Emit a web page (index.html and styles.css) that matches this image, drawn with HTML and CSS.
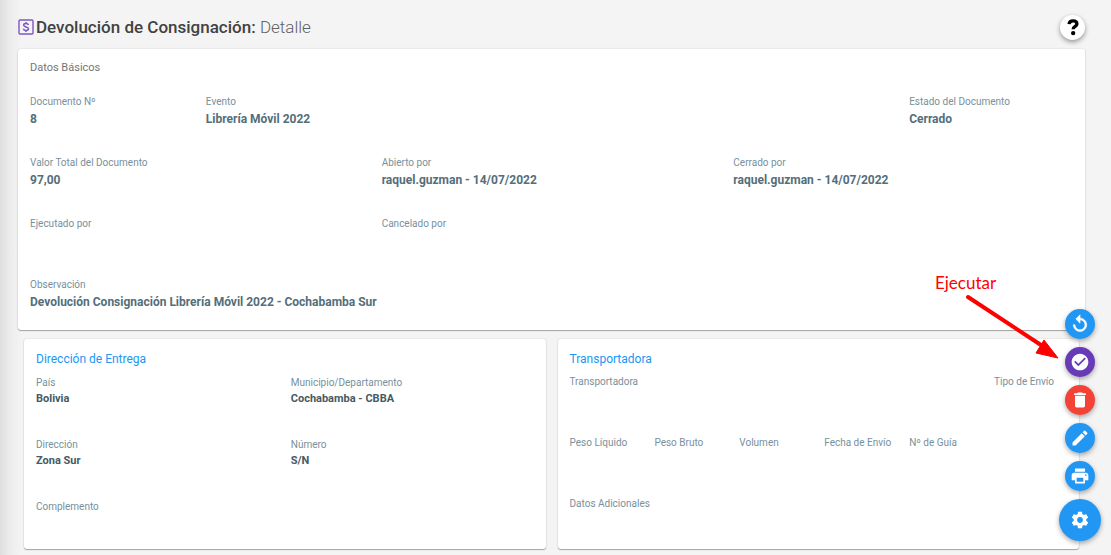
FILE: index.html
```html
<!DOCTYPE html>
<html lang="es">
<head>
<meta charset="utf-8">
<meta name="viewport" content="width=device-width, initial-scale=1">
<title>Devolución de Consignación</title>
<link rel="stylesheet" href="styles.css">
</head>
<body>
<main class="page">
  <header class="page-header">
    <svg class="title-icon" viewBox="0 0 16 16" aria-hidden="true">
      <rect x="1" y="1" width="14" height="14" rx="1" fill="none" stroke="currentColor" stroke-width="1.4"/>
      <path d="M10.400 6C10.200 4.900 9.300 4.400 8 4.400S5.600 5 5.600 6.100S6.800 7.600 8 7.900S10.500 8.600 10.500 9.800S9.300 11.500 8 11.500S5.600 11 5.500 9.800M8 2.900V4.500M8 11.500V13.100" fill="none" stroke="currentColor" stroke-width="1.5"/>
    </svg>
    <h1 class="title">Devolución de Consignación: <span class="title-sub">Detalle</span></h1>
    <button class="help" type="button" aria-label="Ayuda">
      <svg viewBox="0 0 24 24" aria-hidden="true"><path d="M7.300 8.500C7.500 5.700 9.500 4.700 12 4.700C14.700 4.700 16.700 6 16.700 8.300C16.700 11.400 12.200 11.300 12.200 14.800" fill="none" stroke="#000" stroke-width="4"/><circle cx="12.200" cy="19.300" r="2.600"/></svg>
    </button>
  </header>

  <section class="card basic">
    <h2 class="section-label">Datos Básicos</h2>
    <dl class="fields">
      <div class="field"><dt>Documento Nº</dt><dd>8</dd></div>
      <div class="field span-4"><dt>Evento</dt><dd>Librería Móvil 2022</dd></div>
      <div class="field"><dt>Estado del Documento</dt><dd>Cerrado</dd></div>
      <div class="field span-2"><dt>Valor Total del Documento</dt><dd>97,00</dd></div>
      <div class="field span-2"><dt>Abierto por</dt><dd>raquel.guzman - 14/07/2022</dd></div>
      <div class="field span-2"><dt>Cerrado por</dt><dd>raquel.guzman - 14/07/2022</dd></div>
      <div class="field span-2"><dt>Ejecutado por</dt><dd></dd></div>
      <div class="field span-4"><dt>Cancelado por</dt><dd></dd></div>
      <div class="field span-6"><dt>Observación</dt><dd>Devolución Consignación Librería Móvil 2022 - Cochabamba Sur</dd></div>
    </dl>
  </section>

  <div class="card-row">
    <section class="card detail address">
      <h2 class="card-title">Dirección de Entrega</h2>
      <dl class="fields">
        <div class="field span-3"><dt>País</dt><dd>Bolivia</dd></div>
        <div class="field span-3"><dt>Municipio/Departamento</dt><dd>Cochabamba - CBBA</dd></div>
        <div class="field span-3"><dt>Dirección</dt><dd>Zona Sur</dd></div>
        <div class="field span-3"><dt>Número</dt><dd>S/N</dd></div>
        <div class="field span-6"><dt>Complemento</dt><dd></dd></div>
      </dl>
    </section>
    <section class="card detail carrier">
      <h2 class="card-title">Transportadora</h2>
      <dl class="fields">
        <div class="field span-5"><dt>Transportadora</dt><dd></dd></div>
        <div class="field"><dt>Tipo de Envío</dt><dd></dd></div>
        <div class="field"><dt>Peso Líquido</dt><dd></dd></div>
        <div class="field"><dt>Peso Bruto</dt><dd></dd></div>
        <div class="field"><dt>Volumen</dt><dd></dd></div>
        <div class="field"><dt>Fecha de Envío</dt><dd></dd></div>
        <div class="field"><dt>Nº de Guía</dt><dd></dd></div>
        <div class="field span-6"><dt>Datos Adicionales</dt><dd></dd></div>
      </dl>
    </section>
  </div>
</main>

<div class="callout">
  <span class="callout-text">Ejecutar</span>
  <svg class="callout-arrow" viewBox="0 0 96 66" aria-hidden="true"><path d="M4 3L80 53" stroke="#f00" stroke-width="4" stroke-linecap="round"/><path d="M94 64L72 59L76 52.500L80 46Z" fill="#f00" stroke="#f00"/></svg>
</div>

<nav class="actions" aria-label="Acciones">
  <button class="fab" type="button" aria-label="Reabrir"><svg viewBox="0 0 24 24"><path d="M12 5V1L7 6l5 5V7c3.310 0 6 2.690 6 6s-2.690 6-6 6-6-2.690-6-6H4c0 4.420 3.580 8 8 8s8-3.580 8-8-3.580-8-8-8z" stroke="currentColor" stroke-width=".8"/></svg></button>
  <button class="fab fab-run" type="button" aria-label="Ejecutar"><svg viewBox="0 0 24 24"><path d="M12 2C6.480 2 2 6.480 2 12s4.480 10 10 10 10-4.480 10-10S17.520 2 12 2zm-2 15l-5-5 1.410-1.410L10 14.170l7.590-7.590L19 8l-9 9z"/></svg></button>
  <button class="fab fab-delete" type="button" aria-label="Eliminar"><svg viewBox="0 0 24 24"><path d="M6 19c0 1.100.900 2 2 2h8c1.100 0 2-.900 2-2V7H6v12zM19 4h-3.500l-1-1h-5l-1 1H5v2h14V4z"/></svg></button>
  <button class="fab" type="button" aria-label="Editar"><svg viewBox="0 0 24 24"><path d="M3 17.250V21h3.750L17.810 9.940l-3.750-3.750L3 17.250zM20.710 7.040c.390-.390.390-1.020 0-1.410l-2.340-2.340c-.390-.390-1.020-.390-1.410 0l-1.830 1.830 3.750 3.750 1.830-1.830z"/></svg></button>
  <button class="fab" type="button" aria-label="Imprimir"><svg viewBox="0 0 24 24"><path d="M19 8H5c-1.660 0-3 1.340-3 3v6h4v4h12v-4h4v-6c0-1.660-1.340-3-3-3zm-3 11H8v-5h8v5zm3-7c-.550 0-1-.450-1-1s.450-1 1-1 1 .450 1 1-.450 1-1 1zm-1-9H6v4h12V3z"/></svg></button>
  <button class="fab fab-main" type="button" aria-label="Opciones"><svg viewBox="0 0 24 24"><path d="M19.430 12.980c.040-.320.070-.640.070-.980s-.030-.660-.070-.980l2.110-1.650c.190-.150.240-.420.120-.640l-2-3.460c-.120-.220-.390-.300-.610-.220l-2.490 1c-.520-.400-1.080-.730-1.690-.980l-.380-2.650C14.460 2.180 14.250 2 14 2h-4c-.250 0-.460.180-.490.420l-.380 2.650c-.610.250-1.170.590-1.690.980l-2.490-1c-.230-.090-.490 0-.610.220l-2 3.460c-.130.220-.070.490.120.640l2.110 1.650c-.040.320-.070.650-.070.980s.030.660.070.980l-2.110 1.650c-.190.150-.240.420-.120.640l2 3.460c.120.220.390.300.610.220l2.490-1c.520.400 1.080.730 1.690.980l.380 2.650c.030.240.240.420.490.420h4c.250 0 .460-.180.490-.420l.380-2.650c.610-.250 1.170-.590 1.690-.980l2.490 1c.230.090.490 0 .610-.220l2-3.460c.120-.220.070-.490-.120-.640l-2.110-1.650zM12 15.500c-1.930 0-3.500-1.570-3.500-3.500s1.570-3.500 3.500-3.500 3.500 1.570 3.500 3.500-1.570 3.500-3.500 3.500z"/></svg></button>
</nav>
</body>
</html>
```

FILE: styles.css
```css
* {
  box-sizing: border-box;
}

body {
  margin: 0;
  min-height: 100vh;
  background: linear-gradient(to right, #dedede, #ececec 10px, #f4f4f4 22px);
  font-family: Roboto, "Liberation Sans", sans-serif;
  color: #424242;
}

h1,
h2,
dl,
dd {
  margin: 0;
  font-weight: 400;
}

.page {
  padding: 14px 26px 0 18px;
}

.page-header {
  display: flex;
  align-items: center;
  height: 26px;
  margin-bottom: 9px;
}

.title-icon {
  width: 16px;
  height: 16px;
  margin-right: 2px;
  color: #7e57c2;
}

.title {
  font-size: 17px;
  line-height: 26px;
  font-weight: 500;
}

.title-sub {
  font-weight: 300;
  color: #616161;
}

button {
  display: grid;
  place-items: center;
  padding: 0;
  border: 0;
  border-radius: 50%;
  cursor: pointer;
}

.help {
  width: 25px;
  height: 25px;
  margin-left: auto;
  background: #fff;
  box-shadow: 0 2px 5px rgba(0, 0, 0, .4);
}

.help svg {
  width: 20px;
  height: 20px;
}

.card {
  background: #fff;
  border-radius: 3px;
  box-shadow: 0 1px 1px rgba(0, 0, 0, .3), 0 0 2px rgba(0, 0, 0, .15);
}

.basic {
  padding: 11px 0 19px 12px;
}

.section-label {
  margin-bottom: 18px;
  font-size: 11px;
  line-height: 16px;
  color: #757575;
}

.fields {
  display: grid;
  grid-template-columns: repeat(6, minmax(0, 1fr));
  row-gap: 27px;
}

.span-2 { grid-column: span 2; }
.span-3 { grid-column: span 3; }
.span-4 { grid-column: span 4; }
.span-5 { grid-column: span 5; }
.span-6 { grid-column: span 6; }

.field dt {
  font-size: 10px;
  line-height: 16px;
  color: #78909c;
  white-space: nowrap;
}

.field dd {
  min-height: 18px;
  font-size: 12px;
  line-height: 18px;
  font-weight: 700;
  color: #546e7a;
}

.card-row {
  display: grid;
  grid-template-columns: 1fr 1fr;
  gap: 12px;
  padding: 9px 6px 6px;
}

.detail {
  padding: 10px 0 18px 12px;
}

.card-title {
  font-size: 12px;
  line-height: 20px;
  color: #2196f3;
}

.detail dd {
  min-height: 16px;
  font-size: 11px;
  line-height: 16px;
  color: #455a64;
}

.address .fields {
  margin-top: 6px;
  row-gap: 30px;
}

.carrier .fields {
  margin-top: 5px;
  row-gap: 29px;
}

.callout {
  position: absolute;
  top: 272px;
  right: 50px;
  width: 126px;
  pointer-events: none;
}

.callout-text {
  display: block;
  font-family: Lato, sans-serif;
  font-size: 17px;
  line-height: 22px;
  color: #f00;
}

.callout-arrow {
  display: block;
  width: 96px;
  height: 66px;
  margin-left: 29px;
}

.actions {
  position: fixed;
  right: 10px;
  bottom: 14px;
  display: flex;
  flex-direction: column;
  align-items: center;
  gap: 8px;
}

.fab {
  width: 30px;
  height: 30px;
  background: #2196f3;
  color: #fff;
  box-shadow: 0 2px 5px rgba(0, 0, 0, .35);
}

.fab svg {
  width: 20px;
  height: 20px;
  fill: currentColor;
}

.fab-run {
  background: #673ab7;
}

.fab-delete {
  background: #f44336;
}

.fab-main {
  width: 42px;
  height: 42px;
}
```
